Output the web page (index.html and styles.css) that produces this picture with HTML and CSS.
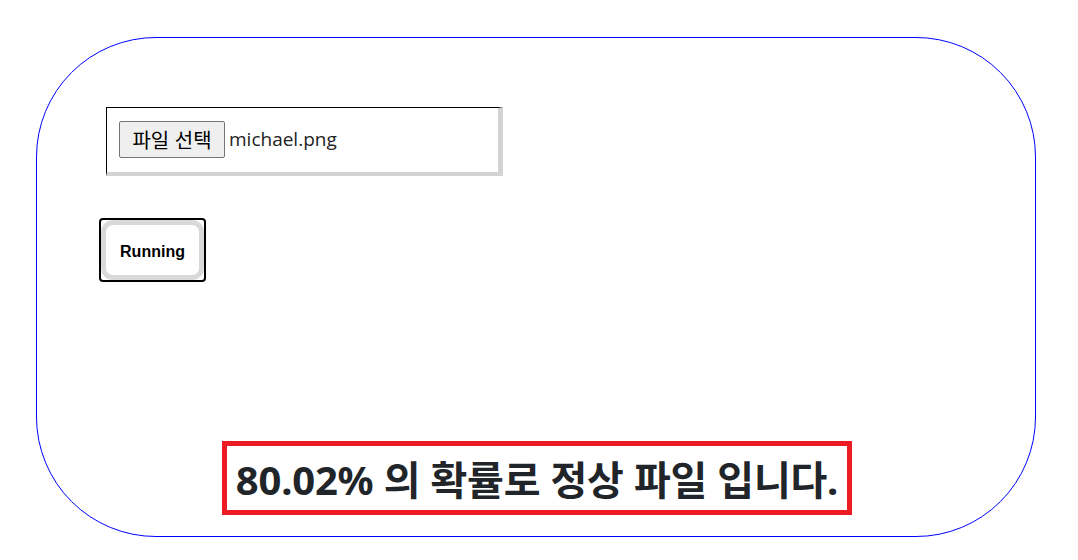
FILE: index.html
```html
<!DOCTYPE html>
<html lang="ko">
<head>
<meta charset="utf-8">
<title>Upload</title>
<link rel="stylesheet" href="styles.css">
</head>
<body>
<div class="card">
  <div class="file-field">
    <button class="file-btn" type="button">파일 선택</button>
    <span class="file-name">michael.png</span>
  </div>
  <div class="run-btn">
    <div class="run-inner">Running</div>
  </div>
  <div class="result">80.02% 의 확률로 정상 파일 입니다.</div>
</div>
</body>
</html>
```

FILE: styles.css
```css
html, body {
  margin: 0;
  padding: 0;
  background: #ffffff;
}

body {
  font-family: "Noto Sans", "Noto Sans CJK KR", sans-serif;
}

.card {
  box-sizing: border-box;
  width: 1000px;
  height: 500px;
  margin: 37px 0 0 36px;
  border: 1px solid #0000ff;
  border-radius: 120px;
  padding: 69px 0 0 62px;
  display: flex;
  flex-direction: column;
  align-items: flex-start;
}

.file-field {
  box-sizing: border-box;
  width: 397px;
  height: 69px;
  margin-left: 7px;
  border-top: 1px solid #000;
  border-left: 1px solid #000;
  border-right: 5px solid #d3d3d3;
  border-bottom: 4px solid #d3d3d3;
  padding: 13px 12px 0 12px;
  display: flex;
  align-items: flex-start;
}

.file-btn {
  box-sizing: border-box;
  width: 106px;
  height: 37px;
  padding: 0;
  margin: 0;
  border: 1px solid #767676;
  border-radius: 2px;
  background: #efefef;
  color: #000;
  font-family: "Noto Sans CJK KR", sans-serif;
  font-size: 20px;
  line-height: 35px;
}

.file-name {
  margin-left: 4px;
  font-family: "Open Sans", "Noto Sans", sans-serif;
  font-size: 19px;
  line-height: 37px;
  color: #222;
}

.run-btn {
  box-sizing: border-box;
  width: 107px;
  height: 64px;
  margin-top: 42px;
  border: 2px solid #000;
  border-radius: 4px;
  background: #fff;
}

.run-inner {
  box-sizing: border-box;
  height: 100%;
  padding-top: 3px;
  border: 5px solid #d9d9d9;
  border-radius: 12px;
  display: flex;
  align-items: center;
  justify-content: center;
  font-family: "Liberation Sans", Arial, sans-serif;
  font-weight: bold;
  font-size: 16px;
  color: #000;
}

.result {
  box-sizing: border-box;
  margin: auto 0 21px 123px;
  width: 630px;
  height: 74px;
  border: 5px solid #ed1c24;
  display: flex;
  align-items: center;
  justify-content: center;
  font-family: "Noto Sans", "Noto Sans CJK KR", sans-serif;
  font-weight: bold;
  font-size: 40px;
  letter-spacing: -0.2px;
  color: #212529;
  white-space: nowrap;
}
```
